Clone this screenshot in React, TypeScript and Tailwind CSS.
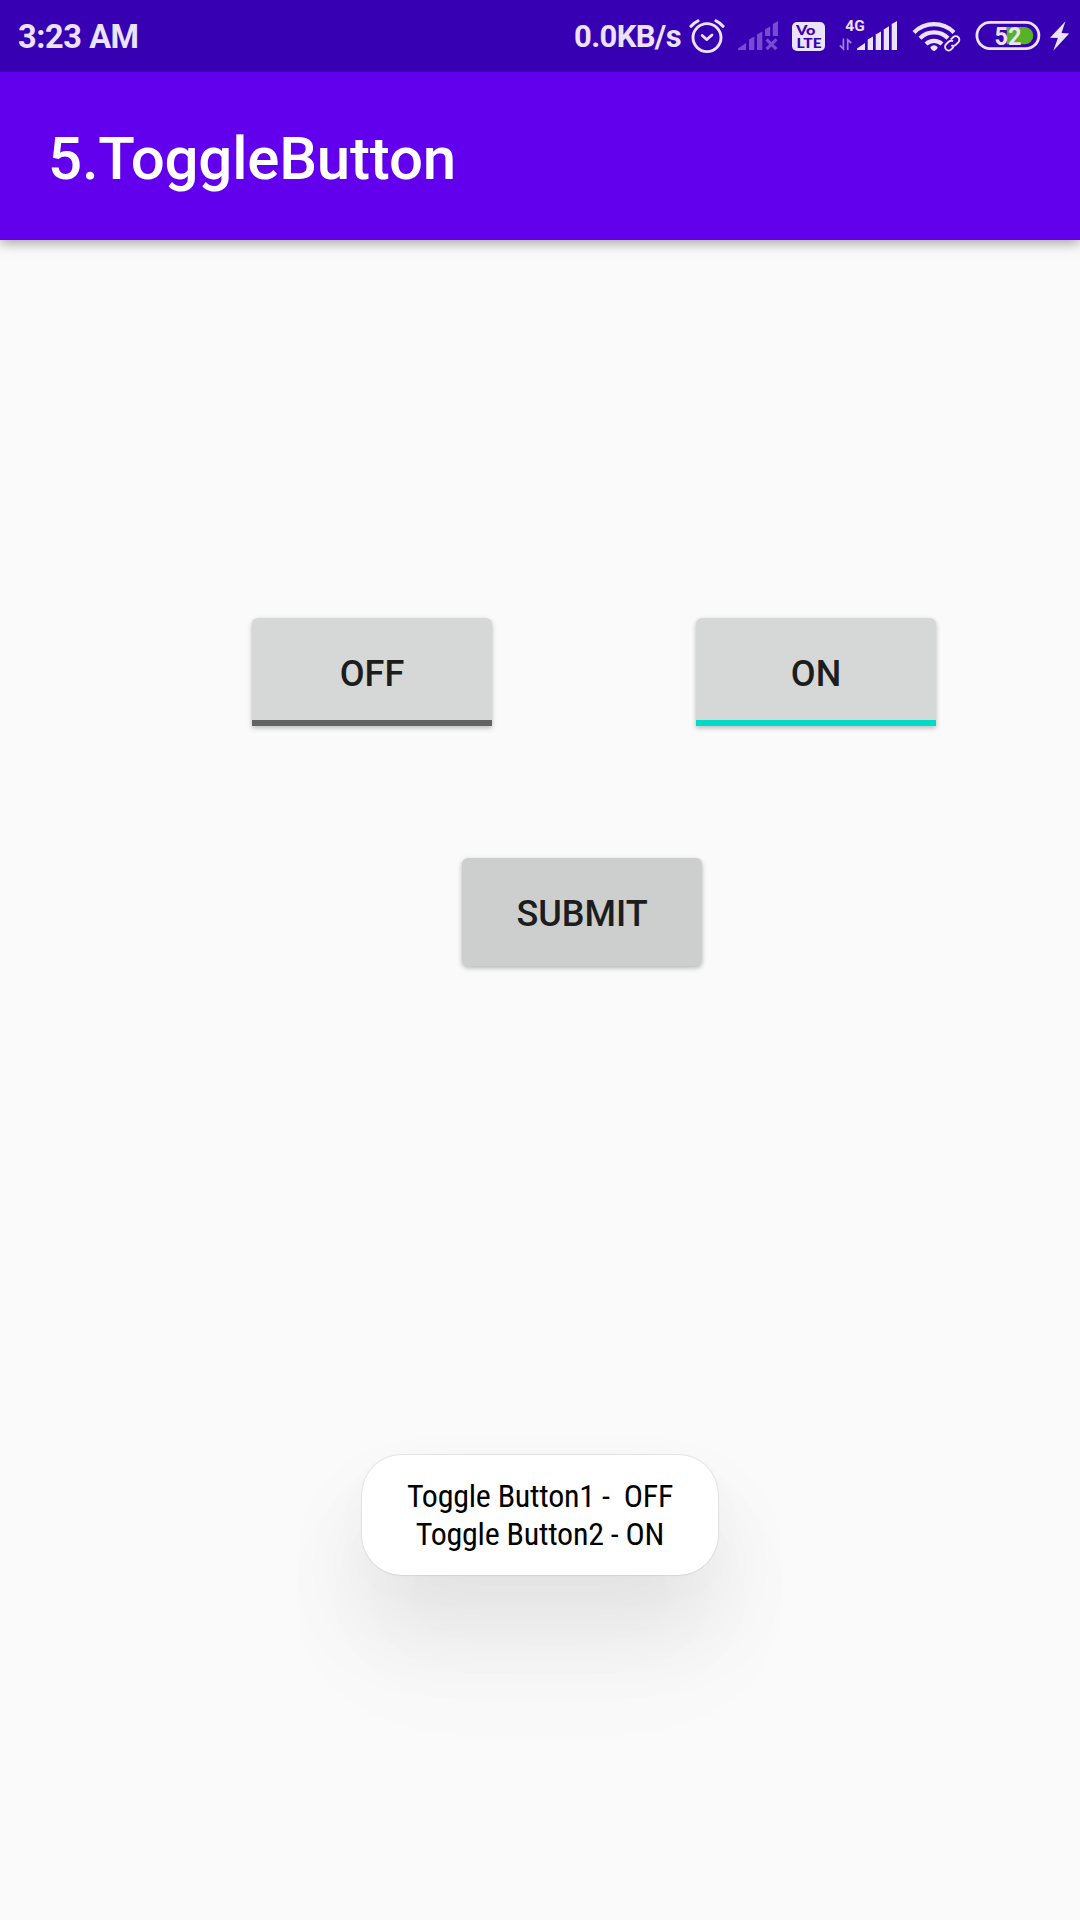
const INK = "#ebe2fb";

function AlarmIcon() {
  return (
    <svg className="h-[72px] w-9" viewBox="689 0 36 72" fill="none" stroke={INK} strokeLinecap="round">
      <circle cx="707" cy="37.6" r="14" strokeWidth="2.9" />
      <path d="M691 26.3 Q694 22.6 698 20.8 M716 20.8 Q720 22.6 723 26.3" strokeWidth="3.1" />
      <path d="M702.2 35.4 L706.6 39.6 L712 35" strokeWidth="2.8" strokeLinejoin="round" />
    </svg>
  );
}

function NoSignalIcon() {
  return (
    <svg className="ml-[13px] h-[72px] w-10" viewBox="738 0 40 72" fill="#764cd0">
      <path d="M738 50 V48.5 L746 43 V50 Z" />
      <path d="M749 50 V39.5 L754.3 36.5 V50 Z" />
      <path d="M757 50 V34.5 L762.3 31.5 V50 Z" />
      <path d="M765 36 V29.5 L770.2 26.3 V36 Z" />
      <path d="M772.8 36 V24 L778 21 V36 Z" />
      <path d="M766.6 39.3 L776.4 49.2 M776.4 39.3 L766.6 49.2" stroke="#764cd0" strokeWidth="3.2" />
    </svg>
  );
}

function VolteIcon() {
  return (
    <svg className="ml-3.5 h-[72px] w-[33px] font-[Lato,sans-serif] font-black" viewBox="792 0 33 72">
      <rect x="792" y="22" width="33" height="29" rx="5" fill={INK} />
      <text x="796" y="34.7" fontSize="13" textLength="19.5" lengthAdjust="spacingAndGlyphs" fill="#3700b3">Vo</text>
      <text x="796.6" y="47.6" fontSize="13.5" textLength="25" lengthAdjust="spacingAndGlyphs" fill="#3700b3">LTE</text>
    </svg>
  );
}

function SignalIcon() {
  return (
    <svg className="ml-[13px] h-[72px] w-[59px] font-bold" viewBox="838 0 59 72" fill={INK}>
      <text x="845.3" y="31" fontSize="15.2" textLength="19.4" lengthAdjust="spacingAndGlyphs">4G</text>
      <path d="M843.4 38.5 V49 L839.8 45.3 M847.7 50 V39.8 L851.3 43" fill="none" stroke="#9f83df" strokeWidth="1.7" />
      <path d="M857 50 V48.5 L865 43 V50 Z" />
      <path d="M867.7 50 V39.5 L873 36.5 V50 Z" />
      <path d="M875.7 50 V34.5 L881 31.5 V50 Z" />
      <path d="M883.7 50 V29.5 L889 26.3 V50 Z" />
      <path d="M891.7 50 V24 L897 21 V50 Z" />
    </svg>
  );
}

function WifiIcon() {
  return (
    <svg className="ml-[15px] h-[72px] w-[50px]" viewBox="912 0 50 72" fill="none" stroke={INK}>
      <path d="M914 32.4 A28.3 28.3 0 0 1 954 32.4" strokeWidth="4.2" />
      <path d="M920 38.2 A19.8 19.8 0 0 1 948 38.2" strokeWidth="4.2" />
      <path d="M926 44 A11.8 11.8 0 0 1 942 44" strokeWidth="4.2" />
      <path d="M930.4 47 Q934 43.4 937.6 47 Q937.6 49.5 934 51.2 Q930.4 49.5 930.4 47 Z" fill={INK} stroke="none" />
      <g transform="translate(952.2 43.3) rotate(-45)">
        <rect x="-11" y="-6" width="22" height="12" rx="6" fill="#3700b3" stroke="none" />
        <path d="M1.5 -3.6 H5 A3.6 3.6 0 0 1 5 3.6 H1.5 Q-1.6 3.4 -2 0.8 M-1.5 3.6 H-5 A3.6 3.6 0 0 1 -5 -3.6 H-1.5 Q1.6 -3.4 2 -0.8" strokeWidth="1.9" />
      </g>
    </svg>
  );
}

function BatteryIcon() {
  return (
    <svg className="ml-[13px] h-[72px] w-[66px] font-bold" viewBox="975 0 66 72">
      <rect x="976.9" y="22.3" width="62" height="26.4" rx="13.2" fill="none" stroke={INK} strokeWidth="2.8" />
      <path d="M1006.7 27 H1024.7 A8.6 8.6 0 0 1 1024.7 44.2 H1006.7 Z" fill="#55b325" />
      <text x="994.4" y="45" fontSize="26.5" textLength="27" lengthAdjust="spacingAndGlyphs" fill={INK}>52</text>
    </svg>
  );
}

function BoltIcon() {
  return (
    <svg className="ml-[9px] h-[72px] w-5" viewBox="1050 0 20 72" fill={INK}>
      <path d="M1065.5 21.3 L1050 37.7 L1057.9 38 L1053.3 50.7 L1069.2 33.6 L1061.5 33 Z" />
    </svg>
  );
}

function Toggle({ label, on }: { label: string; on: boolean }) {
  return (
    <button
      className={`flex h-[108px] w-60 items-center justify-center rounded-t-md border-b-6 bg-[#d6d8d7] pt-2.5 text-[36px] leading-none font-medium text-[#1c1d1c] shadow-[0_2px_5px_rgba(0,0,0,0.26)] ${on ? "border-[#03dac5]" : "border-[#626463]"}`}
    >
      {label}
    </button>
  );
}

export default function App() {
  return (
    <div className="flex h-[1920px] w-[1080px] flex-col overflow-hidden bg-[#fafafa] font-[Roboto,sans-serif]">
      <header className="shadow-[0_3px_12px_rgba(0,0,0,0.36)]">
        <div className="flex h-[72px] items-center bg-[#3700b3] pr-2.5 pl-[18px] text-[#ebe2fb]">
          <span className="pt-0.5 text-[32.5px] leading-none font-bold tracking-[-0.4px]">3:23 AM</span>
          <span className="mr-2 ml-auto pt-px text-[31px] leading-none font-bold tracking-[-0.65px]">0.0KB/s</span>
          <AlarmIcon />
          <NoSignalIcon />
          <VolteIcon />
          <SignalIcon />
          <WifiIcon />
          <BatteryIcon />
          <BoltIcon />
        </div>
        <div className="flex h-[168px] items-center bg-[#6200ee] pt-1.5 pl-12">
          <h1 className="text-[60px] leading-none font-medium tracking-[-0.2px] text-white">5.ToggleButton</h1>
        </div>
      </header>
      <main className="flex flex-1 flex-col">
        <div className="mt-[378px] flex gap-[204px] pl-[252px]">
          <Toggle label="OFF" on={false} />
          <Toggle label="ON" on={true} />
        </div>
        <button className="mt-[132px] ml-[462px] flex h-[108px] w-60 items-center justify-center rounded-md bg-[#cdcfce] pt-1 text-[36px] leading-none font-medium text-[#1c1d1c] shadow-[0_2px_5px_rgba(0,0,0,0.28)]">
          SUBMIT
        </button>
        <div className="mt-[489px] flex h-[120px] w-[356px] flex-col justify-center self-center rounded-[40px] bg-white text-center text-[32px] leading-[38px] tracking-[-0.25px] text-black shadow-[0_0_1px_1px_rgba(0,0,0,0.08),0_52px_90px_rgba(0,0,0,0.08),0_80px_130px_20px_rgba(0,0,0,0.025),0_10px_60px_rgba(0,0,0,0.015)] [font-family:'Roboto_Condensed',Roboto,sans-serif] [font-stretch:75%]">
          <p className="whitespace-pre">Toggle Button1 -  OFF</p>
          <p className="whitespace-pre">Toggle Button2 - ON</p>
        </div>
      </main>
    </div>
  );
}
